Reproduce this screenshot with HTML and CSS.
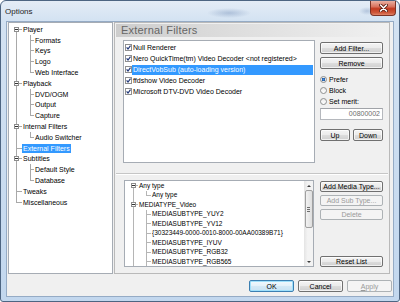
FILE: index.html
```html
<!DOCTYPE html>
<html lang="en">
<head>
    <meta charset="UTF-8">
    <title>Options</title>
    <link rel="stylesheet" href="styles.css">
</head>
<body>
    <div class="window">
        <div class="titlebar">
            <span class="title">Options</span>
            <div class="close">
                <svg width="9" height="8" viewBox="0 0 9 8">
                    <path d="M1.5 1 L7.5 7 M7.5 1 L1.5 7" stroke="#5b1d12" stroke-width="3.2" stroke-linecap="round"/>
                    <path d="M1.5 1 L7.5 7 M7.5 1 L1.5 7" stroke="#fff" stroke-width="1.6" stroke-linecap="round"/>
                </svg>
            </div>
        </div>

        <div class="client">
            <div class="main">
                <div class="nav">
                    <div class="node root"><span class="exp"></span><span class="txt">Player</span></div>
                    <div class="node child"><span class="txt">Formats</span></div>
                    <div class="node child"><span class="txt">Keys</span></div>
                    <div class="node child"><span class="txt">Logo</span></div>
                    <div class="node child last"><span class="txt">Web Interface</span></div>
                    <div class="node root"><span class="exp"></span><span class="txt">Playback</span></div>
                    <div class="node child"><span class="txt">DVD/OGM</span></div>
                    <div class="node child"><span class="txt">Output</span></div>
                    <div class="node child last"><span class="txt">Capture</span></div>
                    <div class="node root"><span class="exp"></span><span class="txt">Internal Filters</span></div>
                    <div class="node child last"><span class="txt">Audio Switcher</span></div>
                    <div class="node leaf"><span class="txt selected">External Filters</span></div>
                    <div class="node root"><span class="exp"></span><span class="txt">Subtitles</span></div>
                    <div class="node child"><span class="txt">Default Style</span></div>
                    <div class="node child last"><span class="txt">Database</span></div>
                    <div class="node leaf"><span class="txt">Tweaks</span></div>
                    <div class="node leaf"><span class="txt">Miscellaneous</span></div>
                </div>

                <div class="page">
                    <div class="page-head">External Filters</div>

                    <div class="upper">
                        <div class="listbox filters">
                            <div class="item"><span class="check"></span><span class="label">Null Renderer</span></div>
                            <div class="item"><span class="check"></span><span class="label">Nero QuickTime(tm) Video Decoder &lt;not registered&gt;</span></div>
                            <div class="item"><span class="check"></span><span class="label selected">DirectVobSub (auto-loading version)</span></div>
                            <div class="item"><span class="check"></span><span class="label">ffdshow Video Decoder</span></div>
                            <div class="item"><span class="check"></span><span class="label">Microsoft DTV-DVD Video Decoder</span></div>
                        </div>
                        <div class="side">
                            <button class="btn">Add Filter...</button>
                            <button class="btn">Remove</button>
                            <div class="radios">
                                <label class="radio"><span class="dot on"></span>Prefer</label>
                                <label class="radio"><span class="dot"></span>Block</label>
                                <label class="radio"><span class="dot"></span>Set merit:</label>
                            </div>
                            <div class="merit">00800002</div>
                            <div class="pair">
                                <button class="btn">Up</button>
                                <button class="btn">Down</button>
                            </div>
                        </div>
                    </div>

                    <div class="lower">
                        <div class="listbox types">
                            <div class="type-tree">
                                <div class="node root"><span class="exp"></span><span class="txt">Any type</span></div>
                                <div class="node child last"><span class="txt">Any type</span></div>
                                <div class="node root"><span class="exp"></span><span class="txt">MEDIATYPE_Video</span></div>
                                <div class="node child"><span class="txt">MEDIASUBTYPE_YUY2</span></div>
                                <div class="node child"><span class="txt">MEDIASUBTYPE_YV12</span></div>
                                <div class="node child"><span class="txt">{30323449-0000-0010-8000-00AA00389B71}</span></div>
                                <div class="node child"><span class="txt">MEDIASUBTYPE_IYUV</span></div>
                                <div class="node child"><span class="txt">MEDIASUBTYPE_RGB32</span></div>
                                <div class="node child"><span class="txt">MEDIASUBTYPE_RGB565</span></div>
                            </div>
                            <div class="vscroll">
                                <div class="arrow up"></div>
                                <div class="track"><div class="thumb"></div></div>
                                <div class="arrow down"></div>
                            </div>
                        </div>
                        <div class="side">
                            <button class="btn">Add Media Type...</button>
                            <button class="btn" disabled>Add Sub Type...</button>
                            <button class="btn" disabled>Delete</button>
                            <button class="btn reset">Reset List</button>
                        </div>
                    </div>
                </div>
            </div>

            <div class="footer">
                <button class="btn default">OK</button>
                <button class="btn">Cancel</button>
                <button class="btn" disabled><u>A</u>pply</button>
            </div>
        </div>
    </div>
</body>
</html>
```

FILE: styles.css
```css
body {
    margin: 0;
    font-family: 'Liberation Sans', Arial, sans-serif;
    font-size: 7px;
    color: #000;
    background: #fff;
}
.window {
    box-sizing: border-box;
    width: 400px;
    height: 302px;
    border: 1px solid #4d6582;
    border-radius: 6px 6px 3px 3px;
    background: linear-gradient(#e4ecf6 0, #d3e2f2 20px, #c2d7ee 100%);
    display: flex;
    flex-direction: column;
}
.titlebar {
    height: 20px;
    display: flex;
    align-items: flex-start;
    background:
        radial-gradient(ellipse 22px 5px at 228px 12px, rgba(60, 95, 150, 0.28), transparent),
        radial-gradient(ellipse 8px 4px at 366px 10px, rgba(60, 95, 150, 0.25), transparent);
}
.title {
    font-size: 8px;
    color: #1e1e1e;
    margin: 6px 0 0 4px;
    flex: 1;
}
.close {
    box-sizing: border-box;
    width: 26px;
    height: 15px;
    margin-right: 3px;
    border: 1px solid #7c3326;
    border-top: none;
    border-radius: 0 0 4px 4px;
    background: linear-gradient(#eab1a3 0%, #d9735e 40%, #c2391f 55%, #cf5a3c 85%, #e0866a 100%);
    display: flex;
    align-items: center;
    justify-content: center;
}
.client {
    box-sizing: border-box;
    height: 276px;
    margin: 0 5px;
    border: 1px solid #95abc5;
    background: #f0f0f0;
    padding: 0 1px 0 1px;
    display: flex;
    flex-direction: column;
}
.main {
    display: flex;
    gap: 1px;
    height: 252px;
}

/* left navigation tree */
.nav {
    box-sizing: border-box;
    width: 105px;
    border: 1px solid #a6acb4;
    padding-top: 1px;
    background: #fff linear-gradient(#a9a9a9, #a9a9a9) no-repeat 7px 6px / 1px 174px;
}
.node {
    display: flex;
    align-items: center;
    white-space: nowrap;
    height: 10.8px;
}
.nav .root {
    padding-left: 5px;
    background: linear-gradient(#a9a9a9, #a9a9a9) no-repeat 7px 50% / 6px 1px;
}
.nav .leaf {
    padding-left: 13px;
    background: linear-gradient(#a9a9a9, #a9a9a9) no-repeat 7px 50% / 6px 1px;
}
.nav .child {
    padding-left: 25px;
    background:
        linear-gradient(#a9a9a9, #a9a9a9) no-repeat 21px 0 / 1px 100%,
        linear-gradient(#a9a9a9, #a9a9a9) no-repeat 21px 50% / 4px 1px;
}
.nav .child.last {
    background:
        linear-gradient(#a9a9a9, #a9a9a9) no-repeat 21px 0 / 1px 50%,
        linear-gradient(#a9a9a9, #a9a9a9) no-repeat 21px 50% / 4px 1px;
}
.exp {
    box-sizing: border-box;
    width: 5px;
    height: 5px;
    margin-right: 3px;
    border: 1px solid #8d8d8d;
    background: #fff linear-gradient(#333, #333) no-repeat center / 3px 1px;
}
.txt {
    padding: 0 1px;
    line-height: 9px;
}
.txt.selected, .label.selected {
    background: #3399ff;
    color: #fff;
}

/* right page */
.page {
    box-sizing: border-box;
    width: 276px;
    border: 1px solid #b9b9b9;
    padding: 1px 1px 0;
    display: flex;
    flex-direction: column;
}
.page-head {
    height: 13px;
    line-height: 13px;
    padding-left: 5px;
    font-size: 11px;
    color: #666;
    letter-spacing: 0.2px;
    background: linear-gradient(to right, #cdcdcd, #dedede 45%, #f0f0f0);
}
.upper {
    display: flex;
    gap: 5px;
    margin-top: 3px;
    padding-left: 7px;
    height: 123px;
}
.listbox {
    box-sizing: border-box;
    border: 1px solid #a6acb4;
    background: #fff;
}
.filters {
    width: 192px;
    padding-top: 1px;
}
.item {
    display: flex;
    align-items: center;
    height: 11px;
    white-space: nowrap;
}
.check {
    box-sizing: border-box;
    width: 7px;
    height: 7px;
    margin-left: 1px;
    border: 1px solid #8f8f8f;
    background: #fff url("data:image/svg+xml,%3Csvg xmlns='http://www.w3.org/2000/svg' width='5' height='5'%3E%3Cpath d='M0.6 2.4 L2 4 L4.5 0.6' fill='none' stroke='%23243a7a' stroke-width='1.2'/%3E%3C/svg%3E") no-repeat center;
}
.label {
    padding: 0 1px;
    line-height: 10px;
}
.label.selected {
    flex: 1;
    margin-right: 1px;
}
.side {
    width: 63px;
    display: flex;
    flex-direction: column;
}
.upper .side {
    padding-top: 2px;
}
.btn {
    box-sizing: border-box;
    height: 12px;
    padding: 0;
    font-family: inherit;
    font-size: 7px;
    color: #000;
    border: 1px solid #707070;
    border-radius: 2px;
    background: linear-gradient(#f4f4f4 0%, #ebebeb 50%, #dddddd 51%, #cfcfcf 100%);
    box-shadow: inset 0 0 0 1px rgba(255, 255, 255, 0.7);
}
.btn + .btn {
    margin-top: 3px;
}
.btn:disabled {
    color: #9a9a9a;
    border-color: #adb2b5;
    background: #f4f4f4;
    box-shadow: none;
}
.radios {
    margin-top: 5px;
}
.radio {
    display: flex;
    align-items: center;
    height: 11px;
}
.dot {
    box-sizing: border-box;
    width: 7px;
    height: 7px;
    margin-right: 2px;
    border: 1px solid #8e8f8f;
    border-radius: 50%;
    background: linear-gradient(#ececec, #fdfdfd);
}
.dot.on {
    background: radial-gradient(circle, #4f8fd8 0, #1f5ba8 1.6px, #e8e8e8 2px);
}
.merit {
    box-sizing: border-box;
    height: 12px;
    margin-top: 1px;
    border: 1px solid #b5b8bd;
    border-top-color: #a0a3a8;
    background: #fff;
    color: #6d6d6d;
    text-align: right;
    line-height: 10px;
    padding-right: 2px;
}
.pair {
    display: flex;
    gap: 3px;
    margin-top: 9px;
}
.pair .btn {
    flex: 1;
    margin: 0;
}

.lower {
    display: flex;
    gap: 6px;
    margin-top: 10px;
    padding: 6px 0 0 8px;
    border-top: 1px solid #c6c6c6;
    box-shadow: inset 0 1px 0 #fff;
}
.types {
    width: 190px;
    height: 87px;
    display: flex;
    overflow: hidden;
}
.type-tree {
    flex: 1;
    font-size: 6.5px;
    overflow: hidden;
    background: linear-gradient(#b5b5b5, #b5b5b5) no-repeat 8px 4.75px / 1px 100%;
}
.type-tree .node {
    height: 9.5px;
}
.type-tree .root {
    padding-left: 6px;
    background: linear-gradient(#b5b5b5, #b5b5b5) no-repeat 8px 50% / 5px 1px;
}
.type-tree .exp {
    margin-right: 2px;
}
.type-tree .child {
    padding-left: 26px;
    background:
        linear-gradient(#b5b5b5, #b5b5b5) no-repeat 21px 0 / 1px 100%,
        linear-gradient(#b5b5b5, #b5b5b5) no-repeat 21px 50% / 5px 1px;
}
.type-tree .child.last {
    background:
        linear-gradient(#b5b5b5, #b5b5b5) no-repeat 21px 0 / 1px 50%,
        linear-gradient(#b5b5b5, #b5b5b5) no-repeat 21px 50% / 5px 1px;
}
.type-tree .txt {
    line-height: 8px;
}
.vscroll {
    width: 9px;
    display: flex;
    flex-direction: column;
    background: linear-gradient(to right, #e4e4e4, #f3f3f3 40%, #f3f3f3);
}
.arrow {
    height: 9px;
    display: flex;
    align-items: center;
    justify-content: center;
}
.arrow::after {
    content: "";
    border: 2px solid transparent;
}
.arrow.up::after {
    border-bottom: 2px solid #3d3d3d;
    margin-top: -2px;
}
.arrow.down::after {
    border-top: 2px solid #3d3d3d;
    margin-bottom: -2px;
}
.track {
    flex: 1;
}
.thumb {
    box-sizing: border-box;
    height: 38px;
    margin: 0 0.5px;
    border: 1px solid #a0a0a0;
    border-radius: 2px;
    background:
        linear-gradient(#6d6d6d, #6d6d6d) no-repeat center 16px / 3px 1px,
        linear-gradient(#6d6d6d, #6d6d6d) no-repeat center 18px / 3px 1px,
        linear-gradient(#6d6d6d, #6d6d6d) no-repeat center 20px / 3px 1px,
        linear-gradient(to right, #f2f2f2, #dedede);
}
.lower .side {
    padding-top: 1px;
    height: 86px;
}
.lower .side .btn {
    height: 11px;
}
.lower .side .reset {
    margin-top: auto;
}

.footer {
    display: flex;
    justify-content: flex-end;
    gap: 4px;
    margin-top: 6px;
}
.footer .btn {
    width: 45px;
    height: 12px;
    margin: 0;
}
.footer .default {
    border-color: #3c7fb1;
    background: linear-gradient(#f2f9fd 0%, #e4f1fa 50%, #d4e9f6 51%, #c9e3f4 100%);
    box-shadow: inset 0 0 0 1px #9fe0fb;
}
```
